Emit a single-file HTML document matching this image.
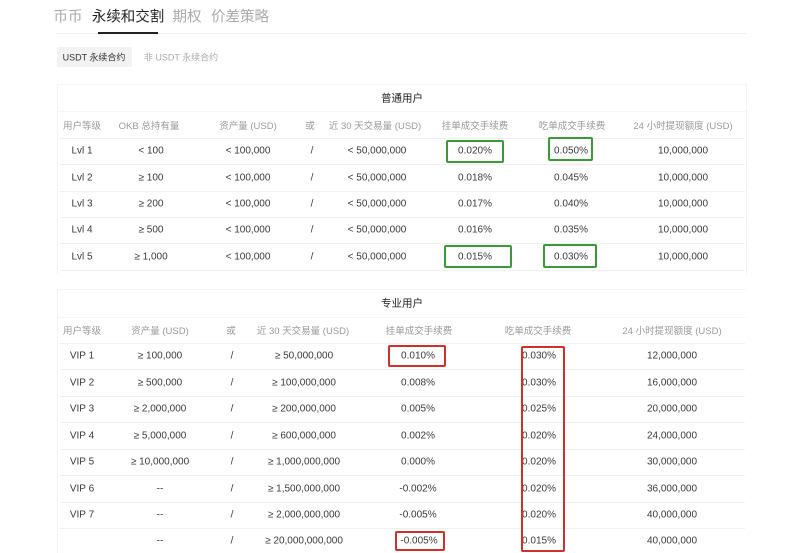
<!DOCTYPE html><html><head><meta charset="utf-8"><style>
body{margin:0;width:800px;height:553px;background:#fff;position:relative;overflow:hidden;font-family:"Liberation Sans","Noto Sans CJK SC",sans-serif;color:#3a3a3a}
.c{position:absolute;transform:translate(-50%,-50%);white-space:nowrap;font-size:10px}
.h{color:#9a9a9a;font-size:9.5px}
.b{position:absolute;box-sizing:border-box}
.g{border:2px solid #3a9a3a;border-radius:2px}
.r{border:2px solid #d0302a;border-radius:2px}
.line{position:absolute;height:1px;background:#f0f0f0}
.vl{position:absolute;width:1px;background:#f3f3f3}
</style></head><body>
<div class="c" style="left:68px;top:16px;font-size:14.5px;color:#aaa">币币</div>
<div class="c" style="left:128px;top:16px;font-size:14.5px;color:#222">永续和交割</div>
<div class="c" style="left:187px;top:16px;font-size:14.5px;color:#aaa">期权</div>
<div class="c" style="left:240px;top:16px;font-size:14.5px;color:#aaa">价差策略</div>
<div class="line" style="left:56px;top:33px;width:690px;background:#eee"></div>
<div class="b" style="left:98px;top:32px;width:60px;height:2px;background:#222"></div>
<div class="b" style="left:57px;top:47px;width:75px;height:20px;background:#f2f2f2;border-radius:2px"></div>
<div class="c" style="left:94px;top:57px;font-size:9px;color:#333">USDT 永续合约</div>
<div class="c" style="left:181px;top:57px;font-size:9px;color:#aaa">非 USDT 永续合约</div>

<div class="line" style="left:57px;top:84px;width:690px;background:#f6f6f6"></div>
<div class="line" style="left:57px;top:111px;width:690px;background:#f6f6f6"></div>
<div class="vl" style="left:57px;top:84px;height:190px"></div>
<div class="vl" style="left:746px;top:84px;height:190px"></div>
<div class="c" style="left:402px;top:98px;font-size:10.5px;color:#222">普通用户</div>
<div class="c h" style="left:82px;top:125px">用户等级</div>
<div class="c h" style="left:149px;top:125px">OKB 总持有量</div>
<div class="c h" style="left:248px;top:125px">资产量 (USD)</div>
<div class="c h" style="left:310px;top:125px">或</div>
<div class="c h" style="left:375px;top:125px">近 30 天交易量 (USD)</div>
<div class="c h" style="left:475px;top:125px">挂单成交手续费</div>
<div class="c h" style="left:572px;top:125px">吃单成交手续费</div>
<div class="c h" style="left:683px;top:125px">24 小时提现额度 (USD)</div>
<div class="line" style="left:60px;top:138px;width:685px"></div>
<div class="line" style="left:60px;top:164px;width:685px"></div>
<div class="line" style="left:60px;top:191px;width:685px"></div>
<div class="line" style="left:60px;top:217px;width:685px"></div>
<div class="line" style="left:60px;top:243px;width:685px"></div>
<div class="line" style="left:60px;top:270px;width:685px"></div>

<div class="c" style="left:82px;top:151px">Lvl 1</div><div class="c" style="left:151px;top:151px">&lt; 100</div><div class="c" style="left:248px;top:151px">&lt; 100,000</div><div class="c" style="left:312px;top:151px">/</div><div class="c" style="left:377px;top:151px">&lt; 50,000,000</div><div class="c" style="left:475px;top:151px">0.020%</div><div class="c" style="left:571px;top:151px">0.050%</div><div class="c" style="left:683px;top:151px">10,000,000</div>
<div class="c" style="left:82px;top:178px">Lvl 2</div><div class="c" style="left:151px;top:178px">≥ 100</div><div class="c" style="left:248px;top:178px">&lt; 100,000</div><div class="c" style="left:312px;top:178px">/</div><div class="c" style="left:377px;top:178px">&lt; 50,000,000</div><div class="c" style="left:475px;top:178px">0.018%</div><div class="c" style="left:571px;top:178px">0.045%</div><div class="c" style="left:683px;top:178px">10,000,000</div>
<div class="c" style="left:82px;top:204px">Lvl 3</div><div class="c" style="left:151px;top:204px">≥ 200</div><div class="c" style="left:248px;top:204px">&lt; 100,000</div><div class="c" style="left:312px;top:204px">/</div><div class="c" style="left:377px;top:204px">&lt; 50,000,000</div><div class="c" style="left:475px;top:204px">0.017%</div><div class="c" style="left:571px;top:204px">0.040%</div><div class="c" style="left:683px;top:204px">10,000,000</div>
<div class="c" style="left:82px;top:230px">Lvl 4</div><div class="c" style="left:151px;top:230px">≥ 500</div><div class="c" style="left:248px;top:230px">&lt; 100,000</div><div class="c" style="left:312px;top:230px">/</div><div class="c" style="left:377px;top:230px">&lt; 50,000,000</div><div class="c" style="left:475px;top:230px">0.016%</div><div class="c" style="left:571px;top:230px">0.035%</div><div class="c" style="left:683px;top:230px">10,000,000</div>
<div class="c" style="left:82px;top:257px">Lvl 5</div><div class="c" style="left:151px;top:257px">≥ 1,000</div><div class="c" style="left:248px;top:257px">&lt; 100,000</div><div class="c" style="left:312px;top:257px">/</div><div class="c" style="left:377px;top:257px">&lt; 50,000,000</div><div class="c" style="left:475px;top:257px">0.015%</div><div class="c" style="left:571px;top:257px">0.030%</div><div class="c" style="left:683px;top:257px">10,000,000</div>

<div class="b g" style="left:446px;top:140px;width:58px;height:23px"></div>
<div class="b g" style="left:548px;top:137px;width:45px;height:24px"></div>
<div class="b g" style="left:444px;top:245px;width:68px;height:23px"></div>
<div class="b g" style="left:543px;top:244px;width:54px;height:24px"></div>

<div class="line" style="left:57px;top:289px;width:690px;background:#f6f6f6"></div>
<div class="line" style="left:57px;top:317px;width:690px;background:#f6f6f6"></div>
<div class="vl" style="left:57px;top:289px;height:264px"></div>
<div class="c" style="left:402px;top:303px;font-size:10.5px;color:#222">专业用户</div>
<div class="c h" style="left:82px;top:330px">用户等级</div>
<div class="c h" style="left:160px;top:330px">资产量 (USD)</div>
<div class="c h" style="left:231px;top:330px">或</div>
<div class="c h" style="left:303px;top:330px">近 30 天交易量 (USD)</div>
<div class="c h" style="left:419px;top:330px">挂单成交手续费</div>
<div class="c h" style="left:538px;top:330px">吃单成交手续费</div>
<div class="c h" style="left:672px;top:330px">24 小时提现额度 (USD)</div>
<div class="line" style="left:60px;top:343px;width:685px"></div>
<div class="line" style="left:60px;top:369px;width:685px"></div>
<div class="line" style="left:60px;top:396px;width:685px"></div>
<div class="line" style="left:60px;top:422px;width:685px"></div>
<div class="line" style="left:60px;top:449px;width:685px"></div>
<div class="line" style="left:60px;top:475px;width:685px"></div>
<div class="line" style="left:60px;top:502px;width:685px"></div>
<div class="line" style="left:60px;top:528px;width:685px"></div>

<div class="c" style="left:82px;top:356px">VIP 1</div><div class="c" style="left:160px;top:356px">≥ 100,000</div><div class="c" style="left:232px;top:356px">/</div><div class="c" style="left:304px;top:356px">≥ 50,000,000</div><div class="c" style="left:418px;top:356px">0.010%</div><div class="c" style="left:539px;top:356px">0.030%</div><div class="c" style="left:672px;top:356px">12,000,000</div>
<div class="c" style="left:82px;top:383px">VIP 2</div><div class="c" style="left:160px;top:383px">≥ 500,000</div><div class="c" style="left:232px;top:383px">/</div><div class="c" style="left:304px;top:383px">≥ 100,000,000</div><div class="c" style="left:418px;top:383px">0.008%</div><div class="c" style="left:539px;top:383px">0.030%</div><div class="c" style="left:672px;top:383px">16,000,000</div>
<div class="c" style="left:82px;top:409px">VIP 3</div><div class="c" style="left:160px;top:409px">≥ 2,000,000</div><div class="c" style="left:232px;top:409px">/</div><div class="c" style="left:304px;top:409px">≥ 200,000,000</div><div class="c" style="left:418px;top:409px">0.005%</div><div class="c" style="left:539px;top:409px">0.025%</div><div class="c" style="left:672px;top:409px">20,000,000</div>
<div class="c" style="left:82px;top:436px">VIP 4</div><div class="c" style="left:160px;top:436px">≥ 5,000,000</div><div class="c" style="left:232px;top:436px">/</div><div class="c" style="left:304px;top:436px">≥ 600,000,000</div><div class="c" style="left:418px;top:436px">0.002%</div><div class="c" style="left:539px;top:436px">0.020%</div><div class="c" style="left:672px;top:436px">24,000,000</div>
<div class="c" style="left:82px;top:462px">VIP 5</div><div class="c" style="left:160px;top:462px">≥ 10,000,000</div><div class="c" style="left:232px;top:462px">/</div><div class="c" style="left:304px;top:462px">≥ 1,000,000,000</div><div class="c" style="left:418px;top:462px">0.000%</div><div class="c" style="left:539px;top:462px">0.020%</div><div class="c" style="left:672px;top:462px">30,000,000</div>
<div class="c" style="left:82px;top:489px">VIP 6</div><div class="c" style="left:160px;top:489px">--</div><div class="c" style="left:232px;top:489px">/</div><div class="c" style="left:304px;top:489px">≥ 1,500,000,000</div><div class="c" style="left:418px;top:489px">-0.002%</div><div class="c" style="left:539px;top:489px">0.020%</div><div class="c" style="left:672px;top:489px">36,000,000</div>
<div class="c" style="left:82px;top:515px">VIP 7</div><div class="c" style="left:160px;top:515px">--</div><div class="c" style="left:232px;top:515px">/</div><div class="c" style="left:304px;top:515px">≥ 2,000,000,000</div><div class="c" style="left:418px;top:515px">-0.005%</div><div class="c" style="left:539px;top:515px">0.020%</div><div class="c" style="left:672px;top:515px">40,000,000</div>
<div class="c" style="left:160px;top:541px">--</div><div class="c" style="left:232px;top:541px">/</div><div class="c" style="left:304px;top:541px">≥ 20,000,000,000</div><div class="c" style="left:419px;top:541px">-0.005%</div><div class="c" style="left:539px;top:541px">0.015%</div><div class="c" style="left:672px;top:541px">40,000,000</div>

<div class="b r" style="left:388px;top:345px;width:58px;height:22px"></div>
<div class="b r" style="left:521px;top:346px;width:44px;height:206px"></div>
<div class="b r" style="left:395px;top:531px;width:50px;height:20px"></div>
</body></html>
